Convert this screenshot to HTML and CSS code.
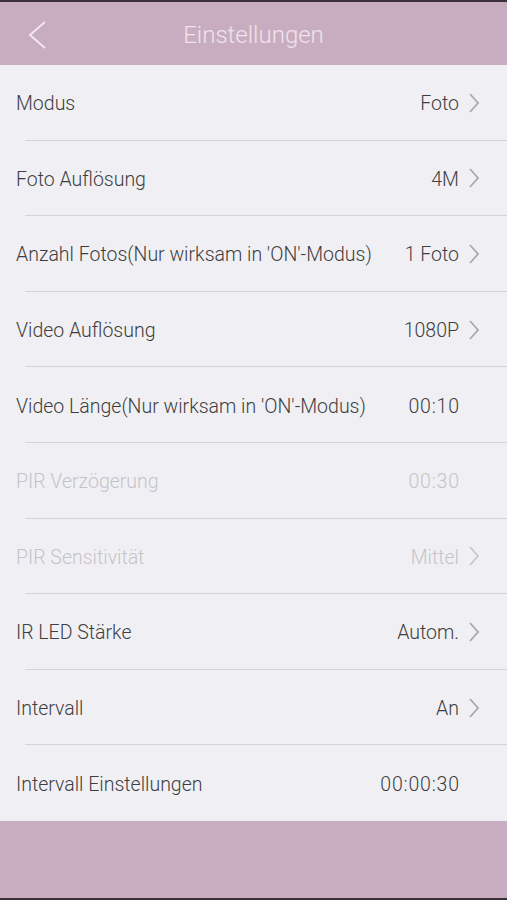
FILE: index.html
```html
<!DOCTYPE html>
<html>
<head>
<meta charset="utf-8">
<link rel="stylesheet" href="styles.css">
</head>
<body>
<div class="screen">
  <div class="topline"></div>
  <header class="header">
    <svg class="back" width="22" height="30" viewBox="0 0 22 30"><path d="M19 2 L4 15 L19 28" fill="none" stroke="#f3e6ef" stroke-width="2"/></svg>
    <h1 class="title">Einstellungen</h1>
  </header>
  <ul class="list">
    <li class="row"><span class="label">Modus</span><span class="value">Foto</span><span class="chev"><svg width="12" height="20" viewBox="0 0 12 20"><path d="M2 1 L10 10 L2 19" fill="none" stroke="#a9a9ad" stroke-width="1.8"/></svg></span></li>
    <li class="row"><span class="label">Foto Auflösung</span><span class="value">4M</span><span class="chev"><svg width="12" height="20" viewBox="0 0 12 20"><path d="M2 1 L10 10 L2 19" fill="none" stroke="#a9a9ad" stroke-width="1.8"/></svg></span></li>
    <li class="row"><span class="label">Anzahl Fotos(Nur wirksam in 'ON'-Modus)</span><span class="value">1 Foto</span><span class="chev"><svg width="12" height="20" viewBox="0 0 12 20"><path d="M2 1 L10 10 L2 19" fill="none" stroke="#a9a9ad" stroke-width="1.8"/></svg></span></li>
    <li class="row"><span class="label">Video Auflösung</span><span class="value">1080P</span><span class="chev"><svg width="12" height="20" viewBox="0 0 12 20"><path d="M2 1 L10 10 L2 19" fill="none" stroke="#a9a9ad" stroke-width="1.8"/></svg></span></li>
    <li class="row"><span class="label">Video Länge(Nur wirksam in 'ON'-Modus)</span><span class="value num">00:10</span><span class="chev"></span></li>
    <li class="row disabled"><span class="label">PIR Verzögerung</span><span class="value num">00:30</span><span class="chev"></span></li>
    <li class="row disabled"><span class="label">PIR Sensitivität</span><span class="value">Mittel</span><span class="chev"><svg width="12" height="20" viewBox="0 0 12 20"><path d="M2 1 L10 10 L2 19" fill="none" stroke="#c8c8cc" stroke-width="1.8"/></svg></span></li>
    <li class="row"><span class="label">IR LED Stärke</span><span class="value">Autom.</span><span class="chev"><svg width="12" height="20" viewBox="0 0 12 20"><path d="M2 1 L10 10 L2 19" fill="none" stroke="#a9a9ad" stroke-width="1.8"/></svg></span></li>
    <li class="row"><span class="label">Intervall</span><span class="value">An</span><span class="chev"><svg width="12" height="20" viewBox="0 0 12 20"><path d="M2 1 L10 10 L2 19" fill="none" stroke="#a9a9ad" stroke-width="1.8"/></svg></span></li>
    <li class="row last"><span class="label">Intervall Einstellungen</span><span class="value num">00:00:30</span><span class="chev"></span></li>
  </ul>
  <footer class="footer"></footer>
  <div class="bottomline"></div>
</div>
</body>
</html>
```
FILE: styles.css
```css
* { box-sizing: border-box; }
html, body { margin: 0; padding: 0; }
body {
  width: 507px;
  height: 900px;
  overflow: hidden;
  font-family: Roboto, "Liberation Sans", Arial, sans-serif;
  font-weight: 300;
  background: #f0f0f4;
}
.screen {
  display: flex;
  flex-direction: column;
  height: 900px;
}
.topline { height: 2px; background: #3b3039; }
.header {
  height: 63px;
  background: #c8adc0;
  display: flex;
  align-items: center;
  justify-content: center;
  position: relative;
}
.back { position: absolute; left: 26px; top: 18px; }
.title {
  margin: 0;
  font-weight: 300;
  font-size: 24px;
  color: #f1e3ec;
  padding-top: 2px;
}
.list {
  list-style: none;
  margin: 0;
  padding: 0;
  background: #f0f0f4;
}
.row {
  height: 75.6px;
  display: flex;
  align-items: center;
  padding-left: 16px;
  padding-top: 2px;
  font-size: 19.5px;
  color: #3e3e40;
  position: relative;
}
.row::after {
  content: "";
  position: absolute;
  left: 25px;
  right: 0;
  bottom: 0;
  height: 1px;
  background: #d4d4d8;
}
.row.last::after { display: none; }
.label { flex: 1; }
.num { letter-spacing: 0.8px; margin-right: -0.8px; }
.chev {
  width: 48px;
  display: flex;
  align-items: center;
  padding-left: 9px;
  padding-bottom: 2px;
}
.disabled { color: #c4c4c8; }
.footer { flex: 1; background: #c8adc0; }
.bottomline { height: 2px; background: #3b3039; }
```
